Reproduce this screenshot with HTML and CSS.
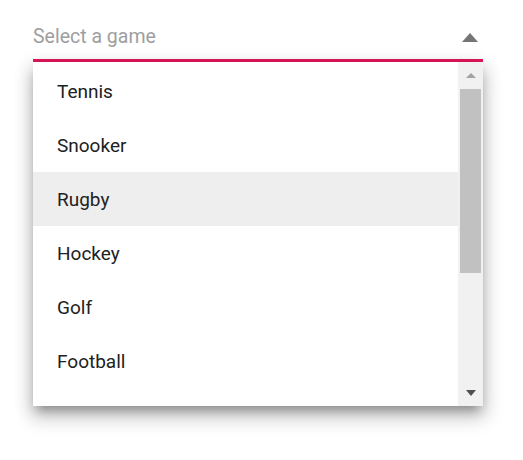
FILE: index.html
```html
<!DOCTYPE html>
<html>
  <head>
    <title>Select a game</title>
    <link rel="stylesheet" href="styles.css">
  </head>
  <body>
    <div class="dropdown">
      <div class="input">
        <span class="placeholder">Select a game</span>
        <span class="caret"></span>
      </div>
      <div class="popup">
        <ul class="list">
          <li class="item">Tennis</li>
          <li class="item">Snooker</li>
          <li class="item hover">Rugby</li>
          <li class="item">Hockey</li>
          <li class="item">Golf</li>
          <li class="item">Football</li>
        </ul>
        <div class="scrollbar">
          <div class="arrow up"></div>
          <div class="thumb"></div>
          <div class="track"></div>
          <div class="arrow down"></div>
        </div>
      </div>
    </div>
  </body>
</html>
```

FILE: styles.css
```css
body {
  margin: 0;
  min-height: 460px;
  background: #fff;
  font-family: Roboto, "Noto Sans", sans-serif;
}

.dropdown {
  width: 450px;
  margin-left: 33px;
  padding-top: 22px;
}

.input {
  display: flex;
  justify-content: space-between;
  align-items: center;
  height: 35px;
  border-bottom: 3px solid #e3165b;
  padding-bottom: 2px;
}

.placeholder {
  font-size: 19.5px;
  color: #9e9e9e;
  margin-top: -6px;
}

.caret {
  width: 0;
  height: 0;
  border-left: 8px solid transparent;
  border-right: 8px solid transparent;
  border-bottom: 9px solid #757575;
  margin-right: 5px;
  margin-top: -5px;
}

.popup {
  display: flex;
  height: 344px;
  background: #fff;
  box-shadow: 0 8px 10px -4px rgba(0, 0, 0, 0.3), 0 12px 18px 2px rgba(0, 0, 0, 0.14), 0 4px 16px 3px rgba(0, 0, 0, 0.12);
}

.list {
  flex: 1;
  margin: 0;
  padding: 2px 0 0;
  list-style: none;
}

.item {
  height: 53px;
  padding-top: 1px;
  line-height: 54px;
  padding-left: 24px;
  font-size: 19px;
  color: #212121;
}

.item.hover {
  background: #eeeeee;
}

.scrollbar {
  display: flex;
  flex-direction: column;
  align-items: center;
  width: 25px;
  background: #f1f1f1;
}

.arrow {
  width: 0;
  height: 0;
  border-left: 5px solid transparent;
  border-right: 5px solid transparent;
}

.arrow.up {
  border-bottom: 5px solid #a3a3a3;
  margin-top: 11px;
}

.arrow.down {
  border-top: 6px solid #505050;
  margin-bottom: 10px;
}

.thumb {
  width: 21px;
  height: 184px;
  margin-top: 11px;
  background: #c1c1c1;
}

.track {
  flex: 1;
}
```
